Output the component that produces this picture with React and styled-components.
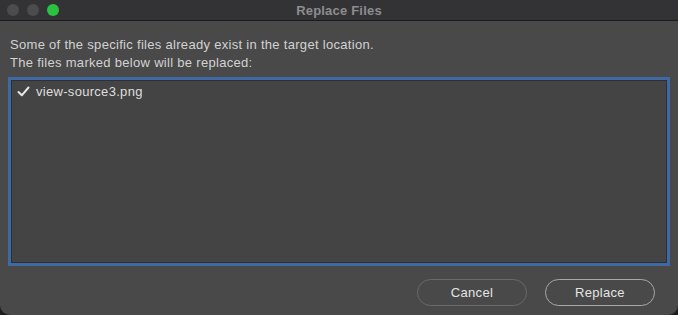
import styled, { createGlobalStyle } from "styled-components";

const Global = createGlobalStyle`
  html, body {
    margin: 0;
    padding: 0;
    background: #1e1e1e;
  }
  body {
    font-family: "Liberation Sans", Arial, sans-serif;
  }
`;

const Window = styled.div`
  width: 678px;
  height: 315px;
  background: #494949;
  border-radius: 0 0 10px 10px;
  display: flex;
  flex-direction: column;
  overflow: hidden;
`;

const TitleBar = styled.div`
  height: 24px;
  background: #333336;
  border-bottom: 1px solid #1c1c1c;
  display: flex;
  align-items: center;
  padding: 0 7px;
  position: relative;
`;

const Lights = styled.div`
  display: flex;
  gap: 8px;
`;

const Light = styled.span`
  width: 12px;
  height: 12px;
  border-radius: 50%;
  background: ${(p) => p.color};
`;

const Title = styled.div`
  position: absolute;
  left: 0;
  right: 0;
  text-align: center;
  color: #8d8d90;
  font-size: 13px;
  font-weight: 700;
  letter-spacing: 0.2px;
`;

const Body = styled.div`
  flex: 1;
  display: flex;
  flex-direction: column;
  padding: 15px 8px 9px 8px;
`;

const Message = styled.p`
  margin: 0 0 0 2px;
  color: #d2d2d2;
  font-size: 13px;
  line-height: 18px;
  letter-spacing: 0.3px;
`;

const FileList = styled.ul`
  list-style: none;
  margin: 5px 0 0 0;
  padding: 2px 6px;
  height: 179px;
  background: #444444;
  border: 3px solid #3e69a5;
  box-shadow: inset 0 0 0 1px #2f2f2f;
`;

const FileItem = styled.li`
  display: flex;
  align-items: center;
  gap: 6px;
  height: 18px;
  color: #dedede;
  font-size: 13px;
  letter-spacing: 0.3px;
`;

const Footer = styled.div`
  display: flex;
  justify-content: flex-end;
  gap: 18px;
  margin-top: 13px;
  padding-right: 15px;
`;

const Button = styled.button`
  width: 110px;
  height: 27px;
  border-radius: 14px;
  background: transparent;
  border: 1px solid ${(p) => (p.primary ? "#a8a8a8" : "#6a6a6a")};
  color: #e4e4e4;
  font-family: "Liberation Sans", Arial, sans-serif;
  font-size: 13px;
  letter-spacing: 0.3px;
  padding: 0;
`;

const Check = () => (
  <svg width="13" height="11" viewBox="0 0 13 11">
    <path d="M1.5 6 L4.8 9.3 L11.5 1.5" fill="none" stroke="#e8e8e8" strokeWidth="2" strokeLinecap="round" strokeLinejoin="round" />
  </svg>
);

export default function App() {
  return (
    <>
      <Global />
      <Window>
        <TitleBar>
          <Title>Replace Files</Title>
          <Lights>
            <Light color="#4c4c4f" />
            <Light color="#4c4c4f" />
            <Light color="#2ac33f" />
          </Lights>
        </TitleBar>
        <Body>
          <Message>Some of the specific files already exist in the target location.</Message>
          <Message>The files marked below will be replaced:</Message>
          <FileList>
            <FileItem>
              <Check />
              view-source3.png
            </FileItem>
          </FileList>
          <Footer>
            <Button>Cancel</Button>
            <Button primary>Replace</Button>
          </Footer>
        </Body>
      </Window>
    </>
  );
}
